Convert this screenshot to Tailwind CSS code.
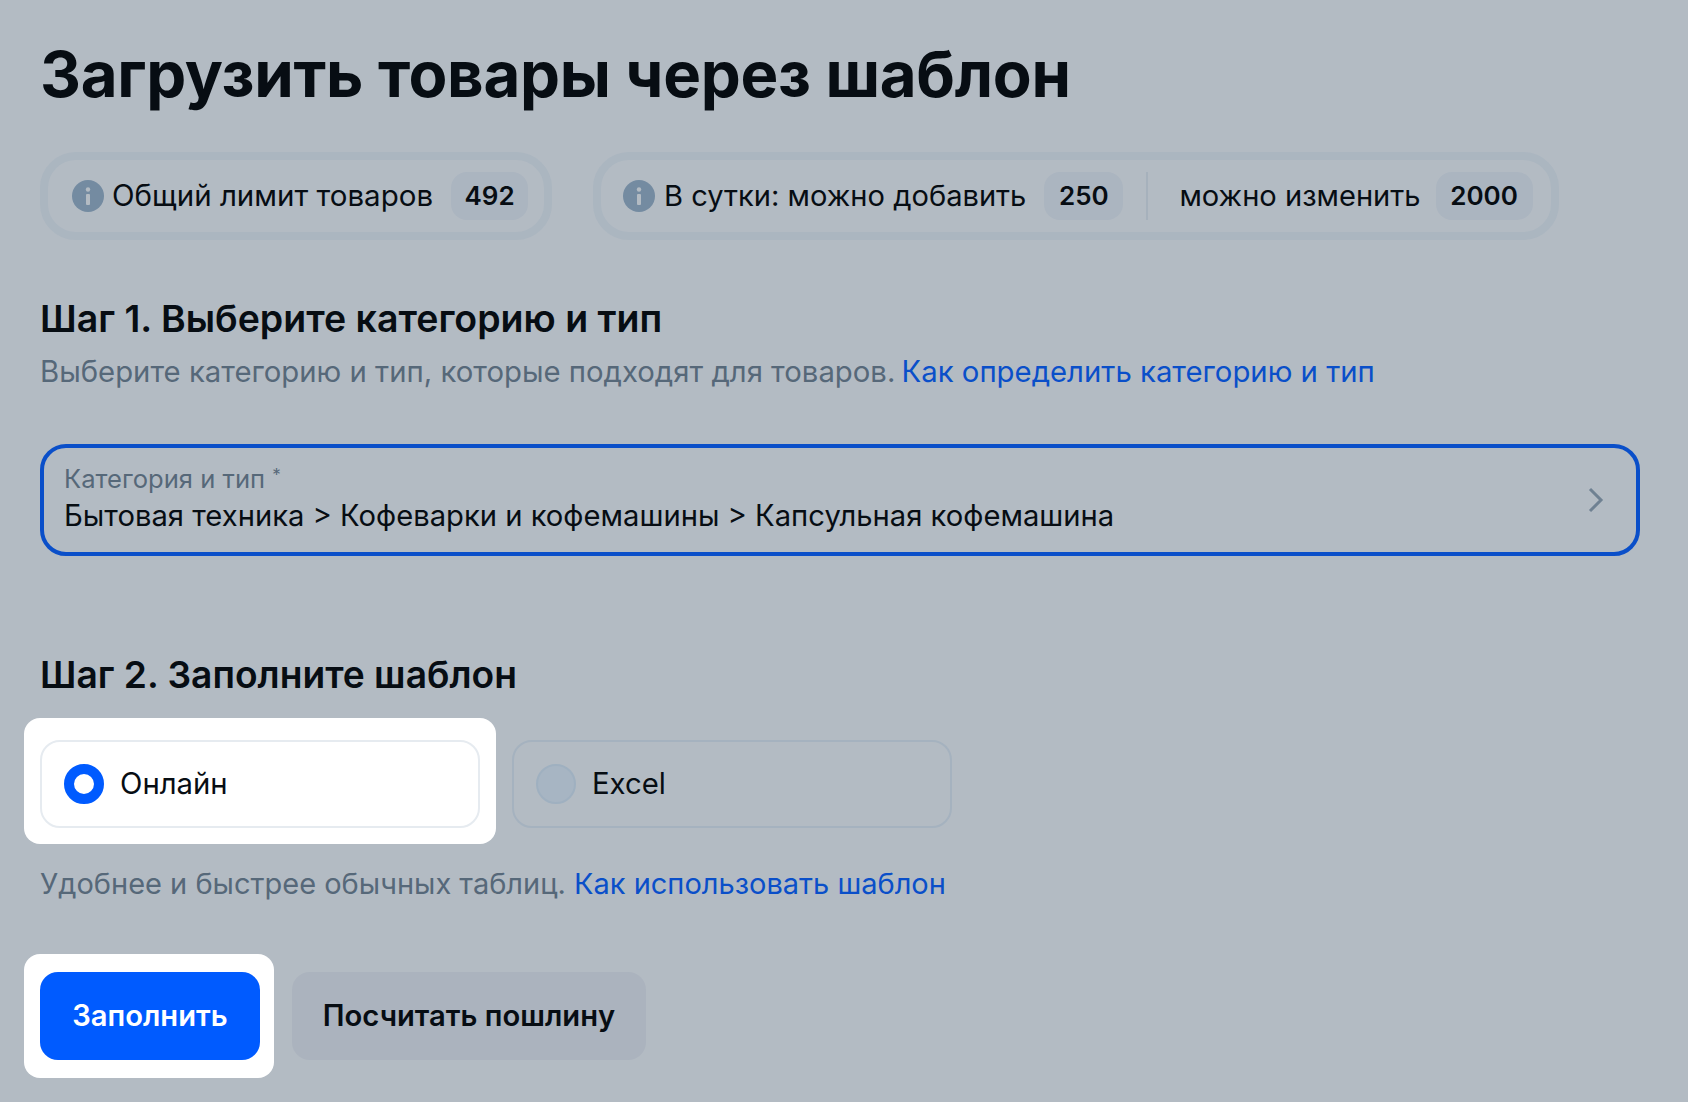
<!DOCTYPE html>
<html lang="ru">
  <head>
    <meta charset="UTF-8" />
    <title>Загрузить товары через шаблон</title>
    <script src="https://cdn.jsdelivr.net/npm/@tailwindcss/browser@4"></script>
  </head>
  <body class="w-[1688px] h-[1102px] overflow-hidden bg-[#b3bbc3] font-['Inter','Noto_Sans',sans-serif] text-[#070d13] pl-[40px] pr-[48px]">
    <h1 class="pt-[36px] text-[63.5px] leading-[76px] font-bold tracking-[-0.3px] whitespace-nowrap">Загрузить товары через шаблон</h1>

    <!-- limits -->
    <div class="mt-[40px] flex gap-[41px] whitespace-nowrap">
      <div class="flex items-center h-[88px] w-[512px] border-[8px] border-[#abb6c0] rounded-[36px] pl-[24px] text-[29.5px]">
        <svg class="w-[32px] h-[32px] shrink-0" viewBox="0 0 32 32">
          <circle cx="16" cy="16" r="16" fill="#748ba1" />
          <rect x="14" y="14" width="4" height="11" rx="1" fill="#b3bbc3" />
          <circle cx="16" cy="9.5" r="2.2" fill="#b3bbc3" />
        </svg>
        <span class="ml-[8px] -mt-[2px]">Общий лимит товаров</span>
        <span class="ml-[18px] w-[77px] h-[48px] pb-[2px] rounded-[16px] bg-[#abb5c0] flex items-center justify-center text-[26px] font-semibold">492</span>
      </div>
      <div class="flex items-center h-[88px] w-[966px] border-[8px] border-[#abb6c0] rounded-[36px] pl-[22px] text-[29.1px]">
        <svg class="w-[32px] h-[32px] shrink-0" viewBox="0 0 32 32">
          <circle cx="16" cy="16" r="16" fill="#748ba1" />
          <rect x="14" y="14" width="4" height="11" rx="1" fill="#b3bbc3" />
          <circle cx="16" cy="9.5" r="2.2" fill="#b3bbc3" />
        </svg>
        <span class="ml-[9px]">В сутки: можно добавить</span>
        <span class="ml-[18px] w-[79px] h-[48px] pb-[2px] rounded-[16px] bg-[#abb5c0] flex items-center justify-center text-[26px] font-semibold">250</span>
        <div class="ml-[23px] w-[2px] h-[48px] bg-[#a6b1bc]"></div>
        <span class="ml-[31px]">можно изменить</span>
        <span class="ml-[15px] w-[97px] h-[48px] pb-[2px] rounded-[16px] bg-[#abb5c0] flex items-center justify-center text-[26px] font-semibold">2000</span>
      </div>
    </div>

    <!-- step 1 -->
    <h2 class="mt-[55px] text-[37.5px] leading-[48px] font-semibold">Шаг 1. Выберите категорию и тип</h2>
    <p class="mt-[5px] text-[29.3px] leading-[48px] text-[#566879]">
      Выберите категорию и тип, которые подходят для товаров.
      <a class="-ml-[2px] text-[#0a4fc9]">Как определить категорию и тип</a>
    </p>
    <div class="mt-[48px] h-[112px] border-[4px] border-[#0a4fc9] rounded-[26px] flex items-center justify-between pl-[20px] pr-[32px]">
      <div class="-mt-[8px]">
        <div class="text-[25.6px] leading-[36px] text-[#566879]">Категория и тип <span class="text-[17px] align-[7px]">*</span></div>
        <div class="text-[29.2px] leading-[38px]">Бытовая техника &gt; Кофеварки и кофемашины &gt; Капсульная кофемашина</div>
      </div>
      <svg class="w-[16px] h-[26px]" viewBox="0 0 16 26" fill="none" stroke="#6f8192" stroke-width="3">
        <path d="M2 2l11 11L2 24" />
      </svg>
    </div>

    <!-- step 2 -->
    <h2 class="mt-[95px] text-[37.2px] leading-[48px] font-semibold">Шаг 2. Заполните шаблон</h2>
    <div class="mt-[19px] flex items-start text-[29.3px]">
      <div class="-ml-[16px] p-[16px] pt-[22px] pb-[16px] bg-white rounded-[16px]">
        <div class="w-[440px] h-[88px] border-[2px] border-[#e6ebf0] rounded-[20px] flex items-center pl-[22px]">
          <div class="w-[40px] h-[40px] rounded-full border-[10px] border-[#005bff] bg-white"></div>
          <span class="ml-[16px]">Онлайн</span>
        </div>
      </div>
      <div class="mt-[22px] ml-[16px] w-[440px] h-[88px] border-[2px] border-[#a5b2bf] rounded-[20px] flex items-center pl-[22px]">
        <div class="w-[40px] h-[40px] rounded-full border-[2px] border-[#9fb0c0] bg-[#a7b5c3]"></div>
        <span class="ml-[16px]">Excel</span>
      </div>
    </div>
    <p class="mt-[16px] text-[29px] leading-[48px] text-[#566879]">
      Удобнее и быстрее обычных таблиц.
      <a class="text-[#0a4fc9]">Как использовать шаблон</a>
    </p>
    <div class="mt-[46px] flex items-start text-[29.2px] font-semibold">
      <div class="-ml-[16px] pl-[16px] pr-[14px] py-[18px] bg-white rounded-[16px]">
        <button class="w-[220px] h-[88px] rounded-[18px] bg-[#005bff] text-white">Заполнить</button>
      </div>
      <button class="mt-[18px] ml-[18px] w-[354px] h-[88px] rounded-[18px] bg-[#abb3be]">Посчитать пошлину</button>
    </div>
  </body>
</html>
